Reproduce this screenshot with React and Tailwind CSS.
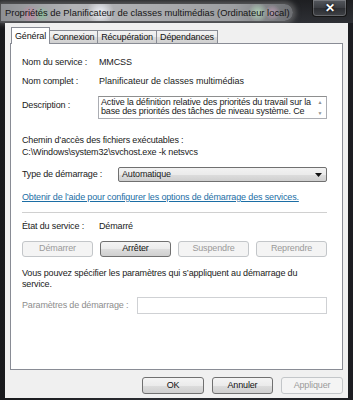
import React from "react";

const font = { fontFamily: '"Liberation Sans", Arial, sans-serif' };

function Btn({ children, disabled, w }) {
  return (
    <div
      className={
        "flex items-center justify-center h-full rounded-[3px] border " +
        (disabled
          ? "border-[#c3c6c9] bg-[#f4f4f4] text-[#9a9a9a]"
          : "border-[#707070] bg-[linear-gradient(#f4f4f4_0%,#ebebeb_50%,#dddddd_51%,#cfcfcf_100%)] text-[#111]") +
        " " + (w || "")
      }
    >
      {children}
    </div>
  );
}

export default function App() {
  return (
    <div
      className="w-[353px] h-[400px] flex flex-col overflow-hidden bg-[linear-gradient(90deg,#18191c_0%,#2a2c31_40%,#1c1d21_100%)] text-[9px] tracking-[-0.15px]"
      style={font}
    >
      {/* Title bar */}
      <div className="h-[23px] flex items-start bg-[linear-gradient(#1e1f22,#2e3035)]">
        <div className="ml-[1px] mt-[4px] h-[17px] w-[292px] rounded-r-[9px] flex items-center pl-[4px] text-[9.4px] tracking-normal leading-[11px] text-[#151515] whitespace-nowrap shadow-[0_0_5px_3px_rgba(140,140,140,0.5)] bg-[radial-gradient(circle_at_10%_60%,rgba(230,120,170,0.55)_0,rgba(230,120,170,0)_9px),radial-gradient(circle_at_14%_60%,rgba(120,220,150,0.5)_0,rgba(120,220,150,0)_8px),radial-gradient(circle_at_34%_50%,rgba(245,248,255,0.9)_0,rgba(245,248,255,0)_14px),radial-gradient(circle_at_88%_50%,rgba(200,255,210,0.6)_0,rgba(200,255,210,0)_10px),radial-gradient(circle_at_93%_50%,rgba(240,180,220,0.5)_0,rgba(240,180,220,0)_8px),linear-gradient(90deg,#8d8f93_0%,#b3b4b7_25%,#a9aaad_55%,#9c9ea1_80%,#6c6e72_100%)]">
          Propriétés de Planificateur de classes multimédias (Ordinateur local)
        </div>
        <div className="ml-auto mr-[6px] w-[35px] h-[17px] rounded-b-[4px] border border-t-0 border-[#151515] bg-[linear-gradient(#55585e,#3a3c41_50%,#2c2e32_51%,#404247)] shadow-[inset_0_0_0_1px_rgba(255,255,255,0.2)] flex items-center justify-center">
          <span className="text-white font-bold text-[12px] leading-none [text-shadow:0_0_3px_#000]">✕</span>
        </div>
      </div>

      {/* Client area */}
      <div className="flex-1 mx-[5px] mb-[2px] bg-[#f0f0f0] flex flex-col pt-[4px]">
        {/* Tabs */}
        <div className="relative z-10 ml-[6px] h-[17px] -mb-px flex items-end text-[#111]">
          <div className="h-[17px] w-[39px] bg-white border border-b-0 border-[#898c95] flex items-start justify-center pt-[3px] leading-[10px]">
            Général
          </div>
          <div className="h-[14px] w-[48px] border border-l-0 border-[#898c95] bg-[linear-gradient(#f2f2f2_0%,#ebebeb_50%,#dddddd_51%,#cfcfcf_100%)] flex items-center justify-center leading-[10px]">
            Connexion
          </div>
          <div className="h-[14px] w-[59px] border border-l-0 border-[#898c95] bg-[linear-gradient(#f2f2f2_0%,#ebebeb_50%,#dddddd_51%,#cfcfcf_100%)] flex items-center justify-center leading-[10px]">
            Récupération
          </div>
          <div className="h-[14px] w-[61px] border border-l-0 border-[#898c95] bg-[linear-gradient(#f2f2f2_0%,#ebebeb_50%,#dddddd_51%,#cfcfcf_100%)] flex items-center justify-center leading-[10px]">
            Dépendances
          </div>
        </div>

        {/* Panel */}
        <div className="mx-[5px] h-[327px] bg-white border border-[#898c95] pl-[11px] pr-[15px] pt-[12px] text-[#1a1a1a] flex flex-col">
          <div className="flex h-[14px] items-center">
            <div className="w-[77px]">Nom du service :</div>
            <div>MMCSS</div>
          </div>
          <div className="flex h-[14px] items-center mt-[5px]">
            <div className="w-[77px]">Nom complet :</div>
            <div className="tracking-[0px]">Planificateur de classes multimédias</div>
          </div>
          <div className="flex mt-[7px] h-[23px]">
            <div className="w-[76px] pt-[4px] leading-[10px]">Description :</div>
            <div className="flex-1 flex border border-[#abadb3] border-t-[#8e8f8f] overflow-hidden">
              <div className="flex-1 pl-[2px] pt-[1px] leading-[9px] whitespace-nowrap overflow-hidden">
                <div>Active la définition relative des priorités du travail sur la</div>
                <div>base des priorités des tâches de niveau système. Ce</div>
              </div>
              <div className="w-[12px] flex flex-col justify-between items-center py-[2px] text-[#909090] text-[5px] leading-[6px]">
                <span>▲</span>
                <span>▼</span>
              </div>
            </div>
          </div>
          <div className="mt-[15px] leading-[12px]">
            <div>Chemin d’accès des fichiers exécutables :</div>
            <div>C:\Windows\system32\svchost.exe -k netsvcs</div>
          </div>
          <div className="flex mt-[9px] h-[15px] items-center">
            <div className="w-[96px]">Type de démarrage :</div>
            <div className="flex-1 h-full flex items-center rounded-[2px] border border-[#707070] bg-[linear-gradient(#f2f2f2_0%,#ebebeb_50%,#dddddd_51%,#cfcfcf_100%)] pl-[3px] pr-[4px]">
              <span className="flex-1">Automatique</span>
              <svg width="7" height="4" viewBox="0 0 7 4"><path d="M0 0h7L3.5 4z" fill="#111" /></svg>
            </div>
          </div>
          <div className="mt-[9px] h-[12px] leading-[12px] text-[#1c6ea5] underline decoration-[#1c6ea5]">
            Obtenir de l’aide pour configurer les options de démarrage des services.
          </div>
          <div className="mt-[9px] h-px bg-[#d0d0d0]" />
          <div className="flex h-[12px] items-center mt-[8px]">
            <div className="w-[77px]">État du service :</div>
            <div>Démarré</div>
          </div>
          <div className="grid grid-cols-4 gap-x-[7px] h-[16px] mt-[8px]">
            <Btn disabled>Démarrer</Btn>
            <Btn>Arrêter</Btn>
            <Btn disabled>Suspendre</Btn>
            <Btn disabled>Reprendre</Btn>
          </div>
          <div className="mt-[11px] leading-[11px]">
            Vous pouvez spécifier les paramètres qui s’appliquent au démarrage du
            <br />
            service.
          </div>
          <div className="flex mt-[7px] h-[17px] items-center">
            <div className="w-[115px] text-[#8d8d8d]">Paramètres de démarrage :</div>
            <div className="flex-1 h-full border border-[#cfd1d4] bg-white" />
          </div>
        </div>

        {/* Footer buttons */}
        <div className="mt-[7px] h-[17px] flex justify-end gap-x-[8px] pr-[5px]">
          <Btn w="w-[62px]">OK</Btn>
          <Btn w="w-[61px]">Annuler</Btn>
          <Btn disabled w="w-[62px]">Appliquer</Btn>
        </div>
      </div>
    </div>
  );
}
